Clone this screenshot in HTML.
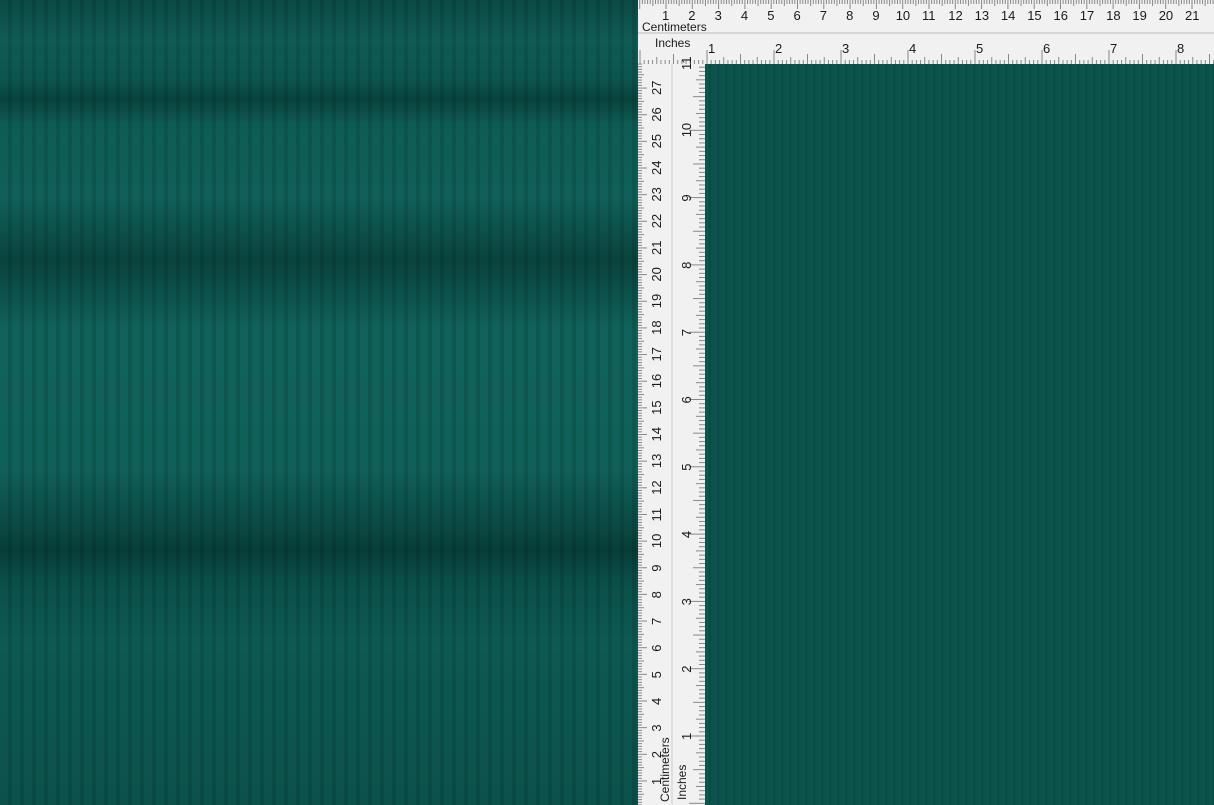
<!DOCTYPE html>
<html><head><meta charset="utf-8"><style>
html,body{margin:0;padding:0;width:1214px;height:805px;overflow:hidden;background:#0b524b}
#l{position:absolute;left:0;top:0;width:638px;height:805px;
background:
repeating-linear-gradient(90deg,rgba(0,0,0,0) 0 8px,rgba(0,20,18,.14) 8px 12px),
linear-gradient(180deg,#0a4a44 0,#0f5c55 40px,#0c554e 80px,#08433d 100px,#0e5d55 125px,#0f6058 200px,#09433d 260px,#0b4e48 285px,#10625a 330px,#0f6058 470px,#0a4842 530px,#073d38 550px,#0b4e48 580px,#0d5a53 640px,#0b524b 805px)}
#r{position:absolute;left:705px;top:64px;width:509px;height:741px;
background:repeating-linear-gradient(90deg,#0c554e 0 4px,#0a4d47 4px 6px,#0b524b 6px 8px)}
#ruler{position:absolute;left:0;top:0}
text{font-family:"Liberation Sans",sans-serif;fill:#1a1a1a}
</style></head><body>
<div id="l"></div><div id="r"></div>
<svg id="ruler" width="1214" height="805" xmlns="http://www.w3.org/2000/svg">
<rect x="638" y="0" width="576" height="64" fill="#f1f1f1"/>
<rect x="638" y="64" width="67" height="741" fill="#f1f1f1"/>
<line x1="638" y1="33" x2="1214" y2="33" stroke="#bbb"/>
<line x1="672" y1="64" x2="672" y2="805" stroke="#ccc"/>
<g id="t" stroke="#888" stroke-width="1"></g>
<g id="tx" font-size="13"></g>
<text x="642" y="31" font-size="12">Centimeters</text>
<text x="655" y="47" font-size="12">Inches</text>
<text transform="translate(669,802) rotate(-90)" font-size="12">Centimeters</text>
<text transform="translate(686,800) rotate(-90)" font-size="12">Inches</text>
</svg>
<script>
var t=document.getElementById('t'),tx=document.getElementById('tx'),s='',u='';
function L(a,b,c,d){s+='<line x1="'+a+'" y1="'+b+'" x2="'+c+'" y2="'+d+'"/>';}
var cm=26.3;
for(var i=0;i<=240;i++){var x=639.7+i*cm/10;if(x>1214)break;var h=i%10==0?9:(i%5==0?6:4);L(x,0,x,h);}
for(var i=1;i<=21;i++)u+='<text x="'+(639.7+i*cm-(i>9?7:4))+'" y="20">'+i+'</text>';
var inch=67;
for(var i=0;i<=140;i++){var x=640+i*inch/16;if(x>1214)break;var h=i%16==0?14:(i%8==0?10:(i%4==0?7:4));L(x,64,x,64-h);}
for(var i=1;i<=8;i++)u+='<text x="'+(640+i*inch+1)+'" y="53">'+i+'</text>';
var c2=26.65,y0=807.6;
for(var i=0;i<300;i++){var y=y0-i*c2/10;if(y<64)break;var h=i%10==0?9:(i%5==0?6:4);L(638,y,638+h,y);}
for(var i=1;i<=27;i++){var y=y0-i*c2;u+='<text transform="translate(661,'+(y+(i>9?7:4))+') rotate(-90)">'+i+'</text>';}
var i2=67.3,y1=803.3;
for(var i=0;i<200;i++){var y=y1-i*i2/16;if(y<64)break;var h=i%16==0?16:(i%8==0?12:(i%4==0?9:6));L(705,y,705-h,y);}
for(var i=1;i<=11;i++){var y=y1-i*i2;u+='<text transform="translate(691,'+(y+(i>9?7:4))+') rotate(-90)">'+i+'</text>';}
t.innerHTML=s;tx.innerHTML=u;
</script>
</body></html>
